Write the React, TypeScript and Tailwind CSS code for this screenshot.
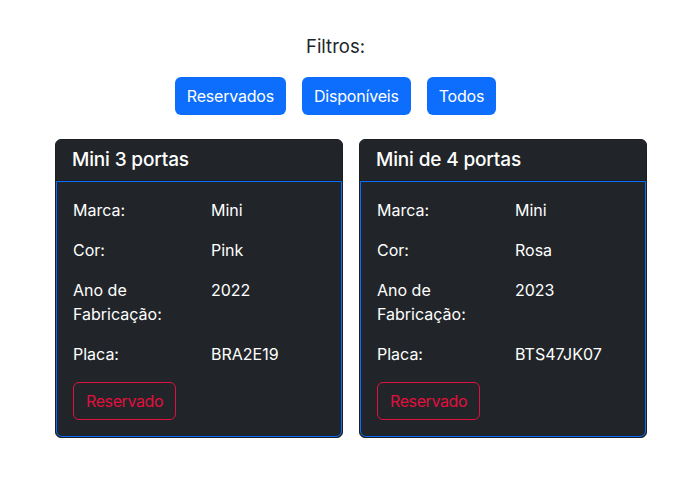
const FILTERS = ["Reservados", "Disponíveis", "Todos"];

const CARROS = [
  { titulo: "Mini 3 portas", marca: "Mini", cor: "Pink", ano: "2022", placa: "BRA2E19" },
  { titulo: "Mini de 4 portas", marca: "Mini", cor: "Rosa", ano: "2023", placa: "BTS47JK07" },
];

function Row({ label, value }: { label: string; value: string }) {
  return (
    <div className="grid grid-cols-2 gap-x-6 mb-4 text-[16px] leading-6 text-white">
      <div>{label}</div>
      <div>{value}</div>
    </div>
  );
}

export default function App() {
  return (
    <div className="min-h-screen bg-white text-[#212529] pt-[34px]" style={{ fontFamily: "Inter, 'Liberation Sans', sans-serif" }}>
      <div className="flex flex-col items-center pr-[26px]">
        <h4 className="text-[18.5px] leading-6 mb-[19px]">Filtros:</h4>
        <div className="flex gap-4 mb-6">
          {FILTERS.map((f) => (
            <button key={f} className="h-[38px] px-3 rounded-md bg-[#0d6efd] text-white text-[16px] leading-6 tracking-[-0.2px]">
              {f}
            </button>
          ))}
        </div>
      </div>

      <div className="flex justify-center gap-4 pl-[5px]">
        {CARROS.map((c) => (
          <div key={c.placa} className="w-[288px] bg-[#212529] border border-[#1b1f23] rounded-md overflow-hidden">
            <div className="px-4 py-2 border-b border-[#1b1f23]">
              <h5 className="text-[19px] font-medium leading-6 text-white tracking-[-0.15px]">{c.titulo}</h5>
            </div>
            <div className="border border-[#0d6efd] rounded-b-md p-4">
              <Row label="Marca:" value={c.marca} />
              <Row label="Cor:" value={c.cor} />
              <Row label="Ano de Fabricação:" value={c.ano} />
              <Row label="Placa:" value={c.placa} />
              <button className="h-[38px] px-3 rounded-md border border-[#e0103f] text-[#e0103f] text-[16px] leading-6 tracking-[-0.4px]">
                Reservado
              </button>
            </div>
          </div>
        ))}
      </div>
    </div>
  );
}
